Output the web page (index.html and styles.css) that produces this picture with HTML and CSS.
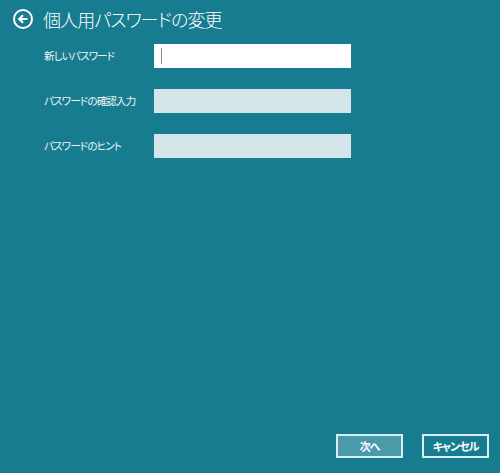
FILE: index.html
```html
<!DOCTYPE html>
<html lang="ja">
<head>
<meta charset="utf-8">
<title>個人用パスワードの変更</title>
<link rel="stylesheet" href="styles.css">
</head>
<body>
<div class="page">
  <header class="header">
    <svg class="back" width="20" height="20" viewBox="0 0 20 20" aria-hidden="true">
      <circle cx="10" cy="10" r="9" fill="none" stroke="#ffffff" stroke-width="2"/>
      <path d="M14.5 10H6.5M10 6.2L6.2 10L10 13.8" fill="none" stroke="#ffffff" stroke-width="2.2" stroke-linecap="butt" stroke-linejoin="miter"/>
    </svg>
    <h1 class="title">個人用パスワードの変更</h1>
  </header>
  <form class="form">
    <div class="row">
      <label class="label">新しいパスワード</label>
      <div class="field field-active"><span class="caret"></span></div>
    </div>
    <div class="row">
      <label class="label">パスワードの確認入力</label>
      <div class="field"></div>
    </div>
    <div class="row">
      <label class="label">パスワードのヒント</label>
      <div class="field"></div>
    </div>
  </form>
  <footer class="footer">
    <button type="button" class="btn btn-primary">次へ</button>
    <button type="button" class="btn">キャンセル</button>
  </footer>
</div>
</body>
</html>
```
FILE: styles.css
```css
html, body {
  margin: 0;
  padding: 0;
  background: #187c90;
}
body {
  font-family: "Noto Sans CJK JP", "Noto Sans", sans-serif;
  font-feature-settings: "palt";
  color: #ffffff;
}
.page {
  height: 473px;
  display: flex;
  flex-direction: column;
  box-sizing: border-box;
}
.header {
  display: flex;
  align-items: center;
  padding: 9px 0 0 13px;
  height: 20px;
}
.back {
  display: block;
  flex: none;
}
.title {
  margin: 0 0 0 10px;
  font-size: 18px;
  font-weight: 300;
  line-height: 20px;
  letter-spacing: -0.9px;
  color: #ffffff;
}
.form {
  margin: 15px 0 0 44px;
  display: flex;
  flex-direction: column;
  gap: 21px;
}
.row {
  display: flex;
  align-items: center;
}
.label {
  width: 110px;
  font-size: 10.5px;
  letter-spacing: -0.8px;
  line-height: 24px;
  color: #eef6f8;
}
.field {
  width: 197px;
  height: 24px;
  background: #d4e5ea;
  position: relative;
}
.field-active {
  background: #ffffff;
}
.caret {
  position: absolute;
  left: 7px;
  top: 4px;
  width: 1px;
  height: 16px;
  background: #8a8a8a;
}
.footer {
  margin-top: auto;
  display: flex;
  justify-content: flex-end;
  gap: 19px;
  padding: 0 11px 15px 0;
}
.btn {
  width: 67px;
  height: 24px;
  box-sizing: border-box;
  border: 2px solid #d6eef3;
  background: #187c90;
  color: #ffffff;
  font-family: "Noto Sans CJK JP", "Noto Sans", sans-serif;
  font-feature-settings: "palt";
  font-size: 11px;
  font-weight: 700;
  letter-spacing: -1px;
  line-height: 18px;
  padding: 0;
  margin: 0;
}
.btn-primary {
  background: #4a9aaa;
}
```
